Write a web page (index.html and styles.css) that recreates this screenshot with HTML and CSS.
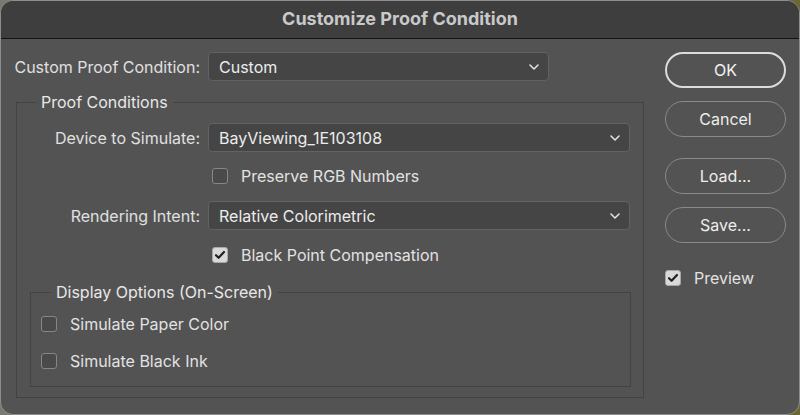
FILE: index.html
```html
<!DOCTYPE html>
<html lang="en">
<head>
  <meta charset="UTF-8" />
  <meta name="viewport" content="width=device-width, initial-scale=1" />
  <title>Customize Proof Condition</title>
  <link rel="stylesheet" href="styles.css">
</head>
<body>
  <div class="window">
    <div class="titlebar">Customize Proof Condition</div>

    <div class="content">
      <div class="left">
        <div class="top-row">
          <span class="label">Custom Proof Condition:</span>
          <div class="select select-short">
            <span>Custom</span>
            <svg class="chev" width="10" height="6" viewBox="0 0 10 6"><path d="M1 1l4 4 4-4" fill="none" stroke="#e6e6e6" stroke-width="1.5" stroke-linecap="round" stroke-linejoin="round"/></svg>
          </div>
        </div>

        <fieldset class="group outer">
          <legend>Proof Conditions</legend>
          <div class="form-grid">
            <span class="label">Device to Simulate:</span>
            <div class="select">
              <span>BayViewing_1E103108</span>
              <svg class="chev" width="10" height="6" viewBox="0 0 10 6"><path d="M1 1l4 4 4-4" fill="none" stroke="#e6e6e6" stroke-width="1.5" stroke-linecap="round" stroke-linejoin="round"/></svg>
            </div>

            <span></span>
            <label class="check row-check first">
              <span class="box"></span> Preserve RGB Numbers
            </label>

            <span class="label">Rendering Intent:</span>
            <div class="select">
              <span>Relative Colorimetric</span>
              <svg class="chev" width="10" height="6" viewBox="0 0 10 6"><path d="M1 1l4 4 4-4" fill="none" stroke="#e6e6e6" stroke-width="1.5" stroke-linecap="round" stroke-linejoin="round"/></svg>
            </div>

            <span></span>
            <label class="check row-check second">
              <span class="box checked"><svg width="12" height="10" viewBox="0 0 12 10"><path d="M2 5.2l2.6 2.6L10 2" fill="none" stroke="#222" stroke-width="2.2" stroke-linecap="round" stroke-linejoin="round"/></svg></span> Black Point Compensation
            </label>
          </div>

          <fieldset class="group inner">
            <legend>Display Options (On-Screen)</legend>
            <label class="check">
              <span class="box"></span> Simulate Paper Color
            </label>
            <label class="check">
              <span class="box"></span> Simulate Black Ink
            </label>
          </fieldset>
        </fieldset>
      </div>

      <div class="right">
        <button class="btn default">OK</button>
        <button class="btn">Cancel</button>
        <button class="btn spaced">Load...</button>
        <button class="btn">Save...</button>
        <label class="check preview">
          <span class="box checked"><svg width="12" height="10" viewBox="0 0 12 10"><path d="M2 5.2l2.6 2.6L10 2" fill="none" stroke="#222" stroke-width="2.2" stroke-linecap="round" stroke-linejoin="round"/></svg></span> Preview
        </label>
      </div>
    </div>
  </div>
</body>
</html>
```

FILE: styles.css
```css
* {
  box-sizing: border-box;
}
body {
  margin: 0;
  width: 800px;
  height: 415px;
  overflow: hidden;
  background: linear-gradient(90deg, #7b7a72, #6a6830);
  font-family: Inter, "Noto Sans", sans-serif;
  font-size: 16px;
  color: #e2e2e2;
}
.window {
  width: 800px;
  height: 415px;
  background: #535353;
  border: 1px solid #8e8e8e;
  border-radius: 13px;
  overflow: hidden;
  display: flex;
  flex-direction: column;
}
.titlebar {
  height: 38px;
  flex-shrink: 0;
  background: #3e3e3e;
  border-bottom: 1px solid #141414;
  color: #c9c9c9;
  font-weight: 700;
  font-size: 18px;
  display: flex;
  align-items: center;
  justify-content: center;
  padding-bottom: 2px;
}
.content {
  display: flex;
  flex: 1;
}
.left {
  width: 643px;
  padding: 13px 0 0 15px;
}
.label {
  text-align: right;
  white-space: nowrap;
  color: #e0e0e0;
}
.top-row {
  display: flex;
  align-items: center;
  gap: 8px;
  margin-left: -15px;
}
.top-row .label {
  width: 199px;
}
.select {
  height: 29px;
  background: #454545;
  border: 1px solid #626262;
  border-radius: 4px;
  display: flex;
  align-items: center;
  justify-content: space-between;
  padding: 0 9px 0 10px;
  color: #ececec;
}
.select-short {
  width: 341px;
  height: 29px;
}
.chev {
  margin-top: 1px;
}
.group {
  margin: 0;
  border: 1px solid #434343;
  padding: 0;
  min-width: 0;
}
.group legend {
  padding: 0 5px;
  color: #e8e8e8;
  line-height: 18px;
}
.outer {
  margin-top: 12px;
  height: 305px;
}
.outer > legend {
  margin-left: 19px;
}
.form-grid {
  display: grid;
  grid-template-columns: 183px 422px;
  column-gap: 8px;
  align-items: center;
  padding-top: 12px;
}
.form-grid .label {
  padding-top: 1px;
}
.check {
  display: flex;
  align-items: center;
  gap: 13px;
  color: #e2e2e2;
  white-space: nowrap;
}
.box {
  width: 16px;
  height: 16px;
  border: 1px solid #868686;
  border-radius: 3px;
  background: #4a4a4a;
  display: flex;
  align-items: center;
  justify-content: center;
  flex-shrink: 0;
}
.box.checked {
  background: #d9d9d9;
  border-color: #a8a8a8;
}
.row-check {
  padding-left: 4px;
  height: 16px;
}
.row-check.first {
  margin: 16px 0 17px;
}
.row-check.second {
  margin: 17px 0 0;
}
.inner {
  margin: 20px 12px 0 13px;
  height: 104px;
  padding: 0 0 0 10px;
}
.inner > legend {
  margin-left: 10px;
}
.inner .check {
  height: 16px;
  margin-top: 15px;
}
.inner .check + .check {
  margin-top: 21px;
}
.right {
  display: flex;
  flex-direction: column;
  padding: 13px 0 0 21px;
}
.btn {
  width: 121px;
  height: 36px;
  border-radius: 18px;
  border: 1px solid #8a8a8a;
  background: transparent;
  color: #ededed;
  font-family: inherit;
  font-size: 16px;
  margin-bottom: 13px;
  padding: 0;
}
.btn.default {
  border: 2px solid #dcdcdc;
  color: #f4f4f4;
}
.btn.spaced {
  margin-top: 8px;
}
.preview {
  margin-top: 14px;
  height: 16px;
}
```
